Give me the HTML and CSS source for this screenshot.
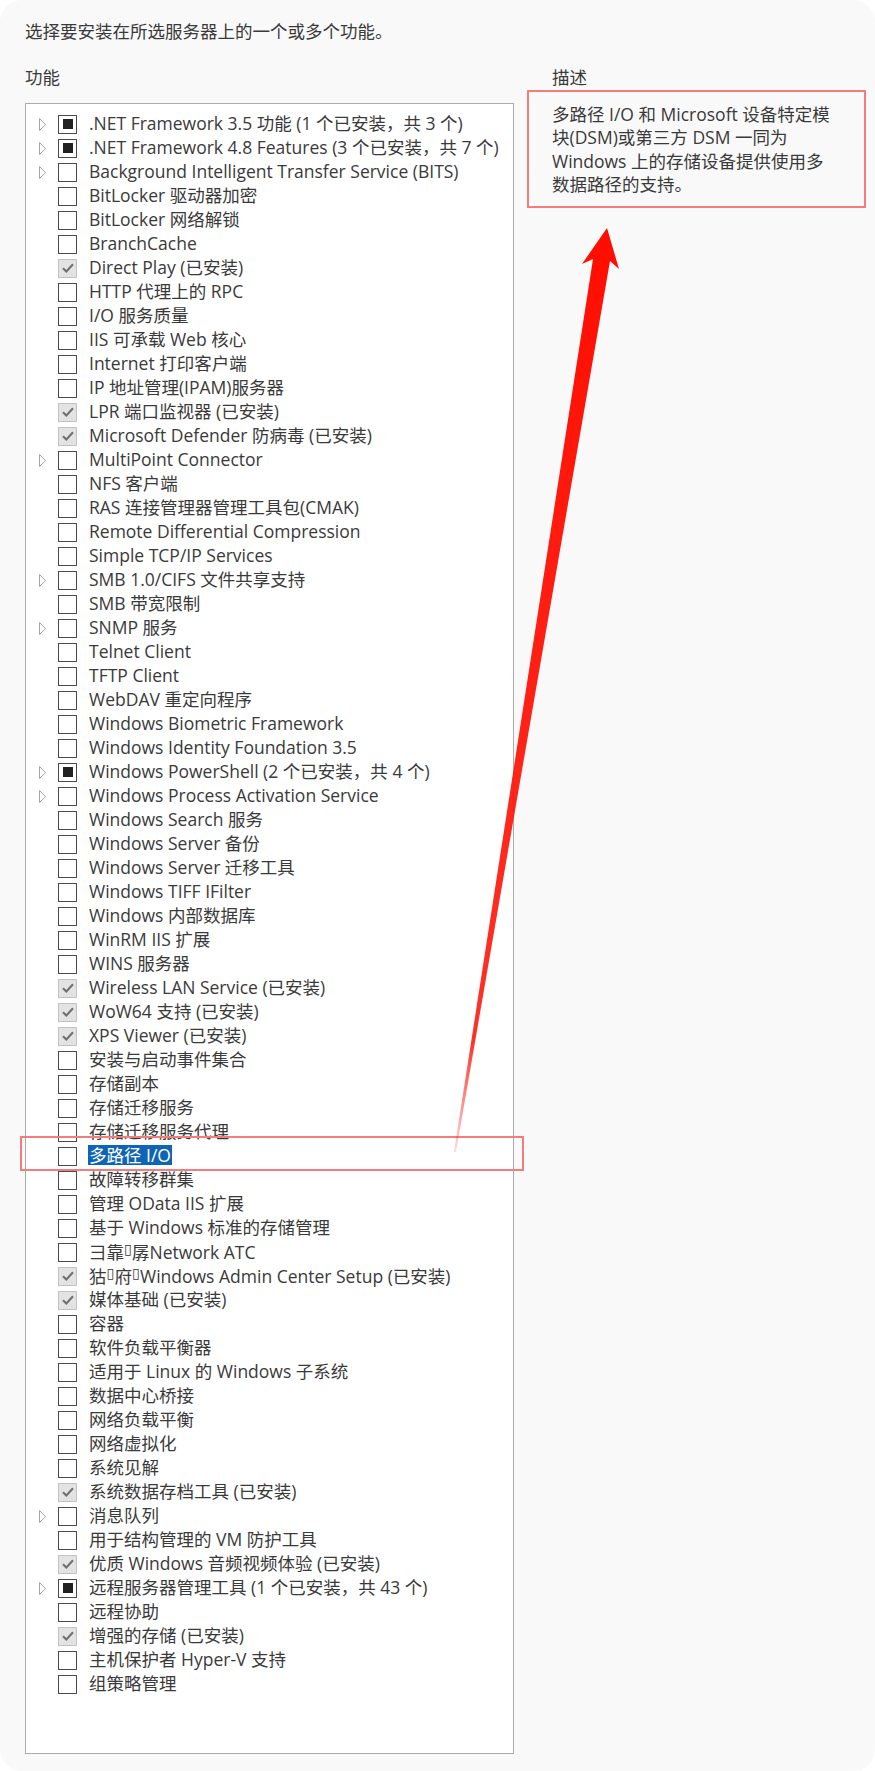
FILE: index.html
```html
<!DOCTYPE html>
<html lang="zh-CN">
<head>
<meta charset="utf-8">
<title>选择功能</title>
<link rel="stylesheet" href="styles.css">
</head>
<body>
<div class="page">
  <p class="intro">选择要安装在所选服务器上的一个或多个功能。</p>
  <div class="columns">
    <section class="features">
      <h2 class="col-title">功能</h2>
      <ul class="tree">
        <li class="row"><span class="exp"><svg viewBox="0 0 7 13"><path d="M0.5 0.5 L6.5 6.5 L0.5 12.5 Z"/></svg></span><span class="cb partial"></span><span class="label">.NET Framework 3.5 功能 (1 个已安装，共 3 个)</span></li>
        <li class="row"><span class="exp"><svg viewBox="0 0 7 13"><path d="M0.5 0.5 L6.5 6.5 L0.5 12.5 Z"/></svg></span><span class="cb partial"></span><span class="label">.NET Framework 4.8 Features (3 个已安装，共 7 个)</span></li>
        <li class="row"><span class="exp"><svg viewBox="0 0 7 13"><path d="M0.5 0.5 L6.5 6.5 L0.5 12.5 Z"/></svg></span><span class="cb"></span><span class="label">Background Intelligent Transfer Service (BITS)</span></li>
        <li class="row"><span class="exp"></span><span class="cb"></span><span class="label">BitLocker 驱动器加密</span></li>
        <li class="row"><span class="exp"></span><span class="cb"></span><span class="label">BitLocker 网络解锁</span></li>
        <li class="row"><span class="exp"></span><span class="cb"></span><span class="label">BranchCache</span></li>
        <li class="row"><span class="exp"></span><span class="cb checked"><svg viewBox="0 0 12 10"><path d="M1 5.2 L4.3 8.5 L11 1.2"/></svg></span><span class="label">Direct Play (已安装)</span></li>
        <li class="row"><span class="exp"></span><span class="cb"></span><span class="label">HTTP 代理上的 RPC</span></li>
        <li class="row"><span class="exp"></span><span class="cb"></span><span class="label">I/O 服务质量</span></li>
        <li class="row"><span class="exp"></span><span class="cb"></span><span class="label">IIS 可承载 Web 核心</span></li>
        <li class="row"><span class="exp"></span><span class="cb"></span><span class="label">Internet 打印客户端</span></li>
        <li class="row"><span class="exp"></span><span class="cb"></span><span class="label">IP 地址管理(IPAM)服务器</span></li>
        <li class="row"><span class="exp"></span><span class="cb checked"><svg viewBox="0 0 12 10"><path d="M1 5.2 L4.3 8.5 L11 1.2"/></svg></span><span class="label">LPR 端口监视器 (已安装)</span></li>
        <li class="row"><span class="exp"></span><span class="cb checked"><svg viewBox="0 0 12 10"><path d="M1 5.2 L4.3 8.5 L11 1.2"/></svg></span><span class="label">Microsoft Defender 防病毒 (已安装)</span></li>
        <li class="row"><span class="exp"><svg viewBox="0 0 7 13"><path d="M0.5 0.5 L6.5 6.5 L0.5 12.5 Z"/></svg></span><span class="cb"></span><span class="label">MultiPoint Connector</span></li>
        <li class="row"><span class="exp"></span><span class="cb"></span><span class="label">NFS 客户端</span></li>
        <li class="row"><span class="exp"></span><span class="cb"></span><span class="label">RAS 连接管理器管理工具包(CMAK)</span></li>
        <li class="row"><span class="exp"></span><span class="cb"></span><span class="label">Remote Differential Compression</span></li>
        <li class="row"><span class="exp"></span><span class="cb"></span><span class="label">Simple TCP/IP Services</span></li>
        <li class="row"><span class="exp"><svg viewBox="0 0 7 13"><path d="M0.5 0.5 L6.5 6.5 L0.5 12.5 Z"/></svg></span><span class="cb"></span><span class="label">SMB 1.0/CIFS 文件共享支持</span></li>
        <li class="row"><span class="exp"></span><span class="cb"></span><span class="label">SMB 带宽限制</span></li>
        <li class="row"><span class="exp"><svg viewBox="0 0 7 13"><path d="M0.5 0.5 L6.5 6.5 L0.5 12.5 Z"/></svg></span><span class="cb"></span><span class="label">SNMP 服务</span></li>
        <li class="row"><span class="exp"></span><span class="cb"></span><span class="label">Telnet Client</span></li>
        <li class="row"><span class="exp"></span><span class="cb"></span><span class="label">TFTP Client</span></li>
        <li class="row"><span class="exp"></span><span class="cb"></span><span class="label">WebDAV 重定向程序</span></li>
        <li class="row"><span class="exp"></span><span class="cb"></span><span class="label">Windows Biometric Framework</span></li>
        <li class="row"><span class="exp"></span><span class="cb"></span><span class="label">Windows Identity Foundation 3.5</span></li>
        <li class="row"><span class="exp"><svg viewBox="0 0 7 13"><path d="M0.5 0.5 L6.5 6.5 L0.5 12.5 Z"/></svg></span><span class="cb partial"></span><span class="label">Windows PowerShell (2 个已安装，共 4 个)</span></li>
        <li class="row"><span class="exp"><svg viewBox="0 0 7 13"><path d="M0.5 0.5 L6.5 6.5 L0.5 12.5 Z"/></svg></span><span class="cb"></span><span class="label">Windows Process Activation Service</span></li>
        <li class="row"><span class="exp"></span><span class="cb"></span><span class="label">Windows Search 服务</span></li>
        <li class="row"><span class="exp"></span><span class="cb"></span><span class="label">Windows Server 备份</span></li>
        <li class="row"><span class="exp"></span><span class="cb"></span><span class="label">Windows Server 迁移工具</span></li>
        <li class="row"><span class="exp"></span><span class="cb"></span><span class="label">Windows TIFF IFilter</span></li>
        <li class="row"><span class="exp"></span><span class="cb"></span><span class="label">Windows 内部数据库</span></li>
        <li class="row"><span class="exp"></span><span class="cb"></span><span class="label">WinRM IIS 扩展</span></li>
        <li class="row"><span class="exp"></span><span class="cb"></span><span class="label">WINS 服务器</span></li>
        <li class="row"><span class="exp"></span><span class="cb checked"><svg viewBox="0 0 12 10"><path d="M1 5.2 L4.3 8.5 L11 1.2"/></svg></span><span class="label">Wireless LAN Service (已安装)</span></li>
        <li class="row"><span class="exp"></span><span class="cb checked"><svg viewBox="0 0 12 10"><path d="M1 5.2 L4.3 8.5 L11 1.2"/></svg></span><span class="label">WoW64 支持 (已安装)</span></li>
        <li class="row"><span class="exp"></span><span class="cb checked"><svg viewBox="0 0 12 10"><path d="M1 5.2 L4.3 8.5 L11 1.2"/></svg></span><span class="label">XPS Viewer (已安装)</span></li>
        <li class="row"><span class="exp"></span><span class="cb"></span><span class="label">安装与启动事件集合</span></li>
        <li class="row"><span class="exp"></span><span class="cb"></span><span class="label">存储副本</span></li>
        <li class="row"><span class="exp"></span><span class="cb"></span><span class="label">存储迁移服务</span></li>
        <li class="row"><span class="exp"></span><span class="cb"></span><span class="label">存储迁移服务代理</span></li>
        <li class="row"><span class="exp"></span><span class="cb"></span><span class="label selected">多路径 I/O</span></li>
        <li class="row"><span class="exp"></span><span class="cb"></span><span class="label">故障转移群集</span></li>
        <li class="row"><span class="exp"></span><span class="cb"></span><span class="label">管理 OData IIS 扩展</span></li>
        <li class="row"><span class="exp"></span><span class="cb"></span><span class="label">基于 Windows 标准的存储管理</span></li>
        <li class="row"><span class="exp"></span><span class="cb"></span><span class="label">彐靠<span class="tofu">▯</span>孱Network ATC</span></li>
        <li class="row"><span class="exp"></span><span class="cb checked"><svg viewBox="0 0 12 10"><path d="M1 5.2 L4.3 8.5 L11 1.2"/></svg></span><span class="label">狜<span class="tofu">▯</span>府<span class="tofu">▯</span>Windows Admin Center Setup (已安装)</span></li>
        <li class="row"><span class="exp"></span><span class="cb checked"><svg viewBox="0 0 12 10"><path d="M1 5.2 L4.3 8.5 L11 1.2"/></svg></span><span class="label">媒体基础 (已安装)</span></li>
        <li class="row"><span class="exp"></span><span class="cb"></span><span class="label">容器</span></li>
        <li class="row"><span class="exp"></span><span class="cb"></span><span class="label">软件负载平衡器</span></li>
        <li class="row"><span class="exp"></span><span class="cb"></span><span class="label">适用于 Linux 的 Windows 子系统</span></li>
        <li class="row"><span class="exp"></span><span class="cb"></span><span class="label">数据中心桥接</span></li>
        <li class="row"><span class="exp"></span><span class="cb"></span><span class="label">网络负载平衡</span></li>
        <li class="row"><span class="exp"></span><span class="cb"></span><span class="label">网络虚拟化</span></li>
        <li class="row"><span class="exp"></span><span class="cb"></span><span class="label">系统见解</span></li>
        <li class="row"><span class="exp"></span><span class="cb checked"><svg viewBox="0 0 12 10"><path d="M1 5.2 L4.3 8.5 L11 1.2"/></svg></span><span class="label">系统数据存档工具 (已安装)</span></li>
        <li class="row"><span class="exp"><svg viewBox="0 0 7 13"><path d="M0.5 0.5 L6.5 6.5 L0.5 12.5 Z"/></svg></span><span class="cb"></span><span class="label">消息队列</span></li>
        <li class="row"><span class="exp"></span><span class="cb"></span><span class="label">用于结构管理的 VM 防护工具</span></li>
        <li class="row"><span class="exp"></span><span class="cb checked"><svg viewBox="0 0 12 10"><path d="M1 5.2 L4.3 8.5 L11 1.2"/></svg></span><span class="label">优质 Windows 音频视频体验 (已安装)</span></li>
        <li class="row"><span class="exp"><svg viewBox="0 0 7 13"><path d="M0.5 0.5 L6.5 6.5 L0.5 12.5 Z"/></svg></span><span class="cb partial"></span><span class="label">远程服务器管理工具 (1 个已安装，共 43 个)</span></li>
        <li class="row"><span class="exp"></span><span class="cb"></span><span class="label">远程协助</span></li>
        <li class="row"><span class="exp"></span><span class="cb checked"><svg viewBox="0 0 12 10"><path d="M1 5.2 L4.3 8.5 L11 1.2"/></svg></span><span class="label">增强的存储 (已安装)</span></li>
        <li class="row"><span class="exp"></span><span class="cb"></span><span class="label">主机保护者 Hyper-V 支持</span></li>
        <li class="row"><span class="exp"></span><span class="cb"></span><span class="label">组策略管理</span></li>
      </ul>
    </section>
    <section class="description">
      <h2 class="col-title">描述</h2>
      <p class="desc-text">多路径 I/O 和 Microsoft 设备特定模<br>块(DSM)或第三方 DSM 一同为<br>Windows 上的存储设备提供使用多<br>数据路径的支持。</p>
    </section>
  </div>

  <div class="mark mark-desc"></div>
  <div class="mark mark-row"></div>
  <svg class="arrow" viewBox="0 0 875 1771" width="875" height="1771">
    <defs>
      <linearGradient id="fade" x1="455" y1="1152" x2="607" y2="228" gradientUnits="userSpaceOnUse">
        <stop offset="0" stop-color="#ff0d00" stop-opacity="0.15"/>
        <stop offset="0.12" stop-color="#ff0d00" stop-opacity="0.85"/>
        <stop offset="1" stop-color="#ff0d00" stop-opacity="1"/>
      </linearGradient>
    </defs>
    <polygon fill="url(#fade)" points="607,228 619,269 610,261 456,1152 454,1152 593,259 582,264"/>
  </svg>
</div>
</body>
</html>
```

FILE: styles.css
```css
* { box-sizing: border-box; }

html, body {
  margin: 0;
  padding: 0;
  background: #ffffff;
}

.page {
  position: relative;
  width: 875px;
  height: 1771px;
  background: #f9f9f9;
  border-radius: 22px;
  padding: 19px 0 0 25px;
  font-family: "Segoe UI", "Open Sans", "Noto Sans CJK SC", sans-serif;
  font-size: 17.5px;
  color: #3a3a3a;
  overflow: hidden;
}

.intro {
  margin: 0;
  line-height: 24px;
  height: 24px;
}

.columns {
  display: flex;
  margin-top: 22px;
}

.col-title {
  margin: 0;
  font-size: 17.5px;
  font-weight: normal;
  line-height: 24px;
  height: 38px;
}

.features {
  width: 489px;
}

.tree {
  list-style: none;
  margin: 0;
  padding: 8px 0 0 13px;
  height: 1651px;
  background: #ffffff;
  border: 1px solid #ababab;
}

.row {
  display: flex;
  align-items: center;
  height: 24px;
  white-space: nowrap;
}

.exp {
  width: 7px;
  height: 13px;
  flex: none;
  margin-right: 12px;
  display: flex;
}

.exp svg {
  width: 7px;
  height: 13px;
  fill: none;
  stroke: #a3a3a3;
  stroke-width: 1;
}

.cb {
  flex: none;
  width: 19px;
  height: 19px;
  border: 1.5px solid #4a4a4a;
  background: #ffffff;
  margin-right: 11px;
  display: flex;
  align-items: center;
  justify-content: center;
}

.cb.partial::after {
  content: "";
  width: 10px;
  height: 10px;
  background: #222222;
}

.cb.checked {
  background: #e3e3e3;
  border-color: #c2c2c2;
}

.cb.checked svg {
  width: 12px;
  height: 10px;
  fill: none;
  stroke: #6f6f6f;
  stroke-width: 2;
}

.label {
  line-height: 20px;
  padding: 0 1px;
  margin-top: -3px;
}

.label.selected {
  background: #0f65b5;
  color: #ffffff;
}

.tofu {
  font-family: "DejaVu Sans", sans-serif;
  font-size: 14px;
  display: inline-block;
  width: 8px;
  overflow: hidden;
  vertical-align: baseline;
}

.description {
  margin-left: 38px;
}

.desc-text {
  margin: 0;
  line-height: 23.3px;
}

.mark {
  position: absolute;
  border: 2px solid #f47c7c;
}

.mark-desc {
  left: 527px;
  top: 90px;
  width: 339px;
  height: 118px;
}

.mark-row {
  left: 20px;
  top: 1136px;
  width: 504px;
  height: 35px;
}

.arrow {
  position: absolute;
  left: 0;
  top: 0;
  pointer-events: none;
}
```
